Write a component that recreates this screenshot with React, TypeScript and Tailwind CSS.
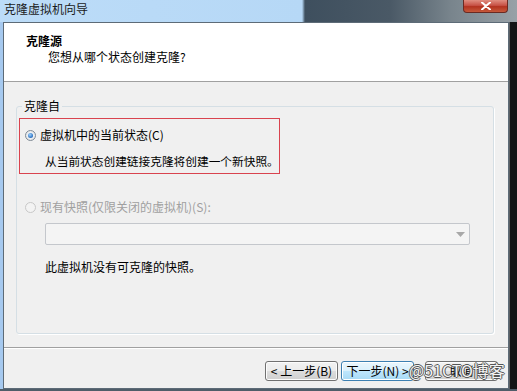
function Radio({ checked, disabled }: { checked?: boolean; disabled?: boolean }) {
  if (disabled) {
    return (
      <span className="flex h-[11px] w-[11px] shrink-0 items-center justify-center rounded-full border border-[#c8c8c8] bg-[#f3f3f3]" />
    );
  }
  return (
    <span className="flex h-[11px] w-[11px] shrink-0 items-center justify-center rounded-full border border-[#7f8a94] bg-[radial-gradient(circle,#ffffff,#d9dde2)]">
      {checked && (
        <span className="h-[5px] w-[5px] rounded-full bg-[radial-gradient(circle_at_40%_35%,#9fd3ff,#2a6fbf_70%,#184f95)]" />
      )}
    </span>
  );
}

function WizardButton({ label, focused }: { label: string; focused?: boolean }) {
  return (
    <button
      className={
        focused
          ? "flex h-[20px] w-[73px] items-center justify-center rounded-[3px] border border-[#3c7fb1] bg-[linear-gradient(#eaf6fd,#d9f0fc_50%,#bee6fd_51%,#a7d9f5)] text-[12px] leading-none text-black shadow-[inset_0_0_0_1px_#fff]"
          : "flex h-[20px] w-[73px] items-center justify-center rounded-[3px] border border-[#707070] bg-[linear-gradient(#f2f2f2,#ebebeb_50%,#dddddd_51%,#cfcfcf)] text-[12px] leading-none text-black shadow-[inset_0_0_0_1px_#fcfcfc]"
      }
    >
      {label}
    </button>
  );
}

export default function App() {
  return (
    <div className="relative flex h-[391px] w-[517px] flex-col overflow-hidden bg-[#2a2d30] font-['Noto_Sans_CJK_SC',sans-serif] text-[12px] text-black">
      {/* title bar */}
      <div className="flex h-[22px] shrink-0 items-start bg-[linear-gradient(90deg,#bcdcf8_0px,#b6d8f6_302px,#3e4f5e_305px,#4a5966_390px,#78848c_450px,#98a1a7_517px)]">
        <span className="ml-[4px] mt-[1px] text-[12px] leading-[16px] text-[#1a1a1a]">克隆虚拟机向导</span>
        <div className="ml-auto mr-[9px] flex h-[13px] w-[45px] items-center justify-center rounded-b-[4px] border border-t-0 border-[#6b2a22] bg-[linear-gradient(#e08d80,#c75246_45%,#b3321f_55%,#c65a3c)]">
          <svg width="10" height="8" viewBox="0 0 10 8">
            <path d="M1 0.5L9 7.5M9 0.5L1 7.5" stroke="#ffffff" strokeWidth="2" strokeLinecap="round" />
          </svg>
        </div>
      </div>

      <div className="flex h-[367px] shrink-0">
        <div className="w-[3px] bg-[#a6c9ef]" />

        <div className="flex w-[506px] flex-col border border-[#5d6b77] bg-[#f0f0f0]">
          {/* header */}
          <div className="h-[59px] shrink-0 border-b border-[#a0a0a0] bg-white pl-[22px] pt-[10px]">
            <div className="text-[12px] font-bold leading-[16px]">克隆源</div>
            <div className="pl-[22px] text-[12px] leading-[15px]">您想从哪个状态创建克隆?</div>
          </div>

          {/* body */}
          <div className="flex flex-1 flex-col">
            <fieldset className="ml-[12px] mt-[16px] h-[236px] w-[478px] rounded-[3px] border border-[#d5dfe5] shadow-[1px_1px_0_#ffffff]">
              <legend className="ml-[5px] px-[2px] text-[12px] leading-[16px]">克隆自</legend>

              <div className="ml-[2px] mt-[4px] h-[56px] w-[261px] border border-[#d9434f]">
                <div className="mt-[8px] flex h-[16px] items-center gap-[4px] pl-[5px]">
                  <Radio checked />
                  <span className="leading-[16px]">虚拟机中的当前状态(C)</span>
                </div>
                <div className="mt-[10px] whitespace-nowrap pl-[25px] text-[11.7px] leading-[16px]">
                  从当前状态创建链接克隆将创建一个新快照。
                </div>
              </div>

              <div className="ml-[8px] mt-[25px] flex h-[16px] items-center gap-[4px]">
                <Radio disabled />
                <span className="leading-[16px] text-[#a0a0a0]">现有快照(仅限关闭的虚拟机)(S):</span>
              </div>

              <div className="ml-[28px] mt-[8px] flex h-[22px] w-[425px] items-center justify-end rounded-[2px] border border-[#c4c7cc] bg-[#f4f4f4] pr-[4px]">
                <svg width="9" height="5" viewBox="0 0 9 5">
                  <path d="M0 0h9L4.5 5z" fill="#a8a8a8" />
                </svg>
              </div>

              <div className="ml-[28px] mt-[14px] leading-[16px]">此虚拟机没有可克隆的快照。</div>
            </fieldset>

            <div className="mt-[13px] h-[2px] border-t border-[#a0a0a0] bg-white" />

            <div className="mt-[12px] flex justify-end gap-[3px] pr-[10px]">
              <WizardButton label="< 上一步(B)" />
              <WizardButton label="下一步(N) >" focused />
              <div className="ml-[8px]">
                <WizardButton label="取消" />
              </div>
            </div>
          </div>
        </div>

        <div className="flex-1 border-l border-[#5b5f63] bg-[#141516]" />
      </div>

      <div className="h-[2px] shrink-0 bg-[#4f5d69]" />

      {/* watermark */}
      <span className="absolute left-[409px] top-[361px] text-[16px] leading-[18px] text-[#f4f4f4] [text-shadow:1px_0_0_#555,-1px_0_0_#555,0_1px_0_#555,0_-1px_0_#555]">
        @51CTO博客
      </span>
    </div>
  );
}
